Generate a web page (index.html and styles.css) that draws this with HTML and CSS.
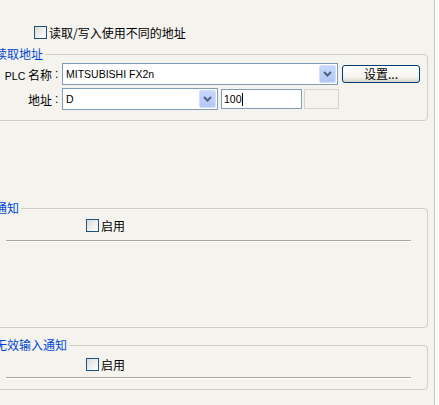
FILE: index.html
```html
<!DOCTYPE html>
<html lang="zh-CN">
<head>
    <meta charset="UTF-8">
    <title>读取地址</title>
    <link rel="stylesheet" href="styles.css">
</head>
<body>

    <div class="page">

        <!-- 读写不同地址 -->
        <div class="top-opt">
            <span class="check"></span>
            <span class="opt-text">读取/写入使用不同的地址</span>
        </div>

        <!-- 读取地址 -->
        <fieldset class="group group-read">
            <legend>读取地址</legend>

            <div class="field-row">
                <span class="field-label"><span class="latin">PLC</span> 名称</span>
                <span class="colon">:</span>
                <div class="combo combo-plc">
                    <span class="combo-text">MITSUBISHI FX2n</span>
                    <span class="combo-btn">
                        <svg width="9" height="6" viewBox="0 0 9 6"><path d="M1 1 L4.5 4.5 L8 1" fill="none" stroke="#4d6185" stroke-width="2"/></svg>
                    </span>
                </div>
                <button class="btn">设置...</button>
            </div>

            <div class="field-row row2">
                <span class="field-label">地址</span>
                <span class="colon">:</span>
                <div class="combo combo-addr">
                    <span class="combo-text">D</span>
                    <span class="combo-btn">
                        <svg width="9" height="6" viewBox="0 0 9 6"><path d="M1 1 L4.5 4.5 L8 1" fill="none" stroke="#4d6185" stroke-width="2"/></svg>
                    </span>
                </div>
                <div class="textbox"><span class="latin">100</span><span class="caret"></span></div>
                <div class="textbox disabled"></div>
            </div>
        </fieldset>

        <!-- 通知 -->
        <fieldset class="group group-notify">
            <legend>通知</legend>
            <div class="enable-row">
                <span class="check"></span>
                <span>启用</span>
            </div>
            <div class="sep"></div>
        </fieldset>

        <!-- 无效输入通知 -->
        <fieldset class="group group-invalid">
            <legend>无效输入通知</legend>
            <div class="enable-row">
                <span class="check"></span>
                <span>启用</span>
            </div>
            <div class="sep"></div>
        </fieldset>

    </div>

</body>
</html>
```

FILE: styles.css
```css
body{
    margin: 0;
    background-color: #fbfbf9;
    font-family: "Noto Sans CJK SC", "Liberation Sans", sans-serif;
    font-size: 12px;
    color: #000;
}

.page{
    width: 434px;
    height: 405px;
    background-color: #f4f3ee;
    border-right: 1px solid #cac8bb;
    overflow: hidden;
}

.latin{
    font-family: "Liberation Sans", sans-serif;
    font-size: 10.5px;
}

/* 체크박스 */
.check{
    display: inline-block;
    width: 13px;
    height: 13px;
    box-sizing: border-box;
    border: 1px solid #1c5180;
    background: linear-gradient(135deg, #dcdcd5, #ffffff);
    flex-shrink: 0;
}

.top-opt{
    display: flex;
    align-items: center;
    gap: 2px;
    height: 13px;
    padding: 26px 0 0 34px;
    line-height: 13px;
}

/* group box */
.group{
    width: 448px;
    box-sizing: border-box;
    margin: 0 0 0 -20px;
    padding: 0 0 10px 14px;
    border: 1px solid #d0cfc3;
    border-radius: 4px;
}

.group legend{
    padding: 0 2px 0 0;
    line-height: 16px;
    color: #0046d5;
}

.group-read{
    margin-top: 7px;
}

.group-notify{
    margin-top: 79px;
    padding-bottom: 85px;
}

.group-invalid{
    margin-top: 9px;
}

.field-row{
    display: flex;
    align-items: center;
    margin-top: 1px;
}

.row2{
    margin-top: 3px;
}

.field-label{
    width: 57px;
    text-align: right;
    white-space: nowrap;
}

.colon{
    width: 7px;
    padding-left: 3px;
    font-family: "Liberation Sans", sans-serif;
    font-size: 12px;
}

.combo{
    display: flex;
    height: 22px;
    box-sizing: border-box;
    border: 1px solid #7f9db9;
    background-color: #fff;
}

.combo-plc{
    width: 276px;
}

.combo-addr{
    width: 156px;
}

.combo-text{
    flex: 1;
    padding-left: 3px;
    line-height: 20px;
    font-family: "Liberation Sans", sans-serif;
    font-size: 10.5px;
}

.combo-btn{
    width: 15px;
    margin: 1px;
    display: flex;
    align-items: center;
    justify-content: center;
    border: 1px solid #d4e0fb;
    border-radius: 2px;
    background: linear-gradient(#c8d7fb, #b2c7f5);
}

.btn{
    width: 78px;
    height: 18px;
    margin-left: 4px;
    padding: 0;
    border: 1px solid #003c74;
    border-radius: 3px;
    background: linear-gradient(#ffffff, #f4f3ee 70%, #d8d2c6);
    font-family: "Noto Sans CJK SC", sans-serif;
    font-size: 12px;
    line-height: 16px;
    color: #000;
}

.textbox{
    display: flex;
    align-items: center;
    width: 81px;
    height: 20px;
    box-sizing: border-box;
    margin-left: 3px;
    padding-left: 2px;
    border: 1px solid #7f9db9;
    background-color: #fff;
}

.textbox.disabled{
    width: 35px;
    margin-left: 2px;
    border-color: #d6d4c8;
    background-color: #f4f3ee;
}

.caret{
    width: 1px;
    height: 13px;
    background-color: #000;
}

.enable-row{
    display: flex;
    align-items: center;
    gap: 2px;
    height: 13px;
    margin-top: 3px;
    padding-left: 91px;
    line-height: 13px;
}

.group-invalid .enable-row{
    margin-top: 5px;
}

.sep{
    width: 405px;
    margin: 8px 0 0 11px;
    border-top: 1px solid #a9a79b;
    border-bottom: 1px solid #fff;
}

.group-invalid .sep{
    margin-top: 6px;
}
```
